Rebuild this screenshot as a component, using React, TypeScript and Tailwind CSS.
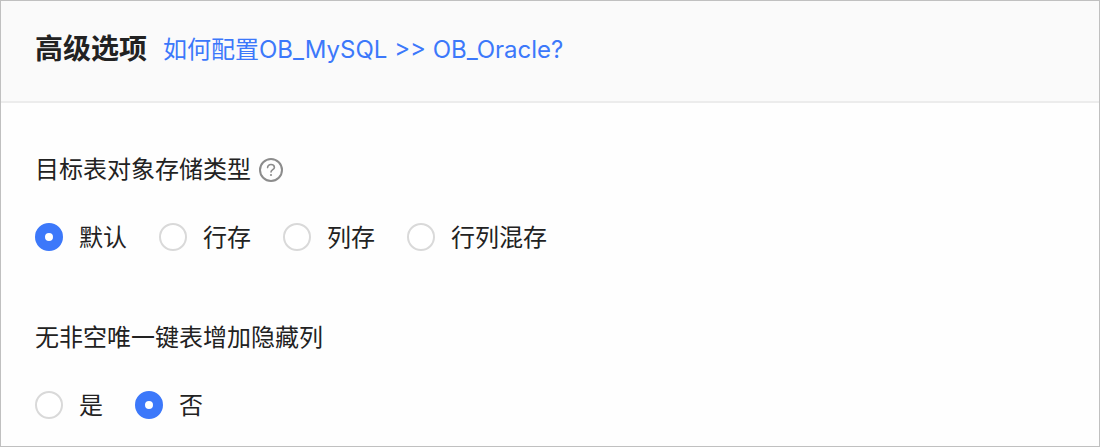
import React, { useState } from 'react';

interface RadioGroupProps {
    name: string;
    options: string[];
    value: string;
    onChange: (value: string) => void;
}

const RadioGroup: React.FC<RadioGroupProps> = ({ name, options, value, onChange }) => (
    <div className="flex flex-wrap items-center gap-x-8">
        {options.map((option) => (
            <label key={option} className="flex items-center gap-4 cursor-pointer">
                <input
                    type="radio"
                    name={name}
                    value={option}
                    checked={value === option}
                    onChange={() => onChange(option)}
                    className="size-7 shrink-0 appearance-none rounded-full border-2 border-[#d9d9d9] bg-white checked:border-10 checked:border-[#3c78fa]"
                />
                <span className="pt-0.5">{option}</span>
            </label>
        ))}
    </div>
);

const HelpIcon = () => (
    <svg viewBox="0 0 24 24" className="size-6" fill="none" stroke="#8c8c8c" strokeLinecap="round">
        <circle cx="12" cy="12" r="11" strokeWidth="2" />
        <path d="M8.6 9.6c0-1.9 1.5-3.1 3.4-3.1s3.4 1.2 3.4 2.9c0 2.2-3.4 2.3-3.4 4.6" strokeWidth="1.6" />
        <circle cx="12" cy="17" r="1.1" fill="#8c8c8c" stroke="none" />
    </svg>
);

const App: React.FC = () => {
    const [storageType, setStorageType] = useState('默认');
    const [hiddenColumn, setHiddenColumn] = useState('否');

    return (
        <main className="min-h-screen border border-[#c0c0c0] bg-[#fefefe] font-[Inter,'Noto_Sans_CJK_SC',sans-serif] text-2xl leading-8 text-[#222222]">
            <header className="flex items-center gap-4 border-b-2 border-[#ececec] bg-[#fafafa] px-[34px] pt-[31px] pb-[35px]">
                <h1 className="text-[28px] leading-8 font-semibold">高级选项</h1>
                <a href="#help" className="pt-0.5 text-[#3c78fa]">如何配置OB_MySQL &gt;&gt; OB_Oracle?</a>
            </header>

            <section className="px-[34px] pt-[51px]">
                <h2 className="mb-[34px] flex items-center gap-2">
                    目标表对象存储类型
                    <button type="button" aria-label="帮助">
                        <HelpIcon />
                    </button>
                </h2>
                <RadioGroup
                    name="storageType"
                    options={['默认', '行存', '列存', '行列混存']}
                    value={storageType}
                    onChange={setStorageType}
                />
            </section>

            <section className="px-[34px] pt-17">
                <h2 className="mb-[34px]">无非空唯一键表增加隐藏列</h2>
                <RadioGroup
                    name="hiddenColumn"
                    options={['是', '否']}
                    value={hiddenColumn}
                    onChange={setHiddenColumn}
                />
            </section>
        </main>
    );
};

export default App;
